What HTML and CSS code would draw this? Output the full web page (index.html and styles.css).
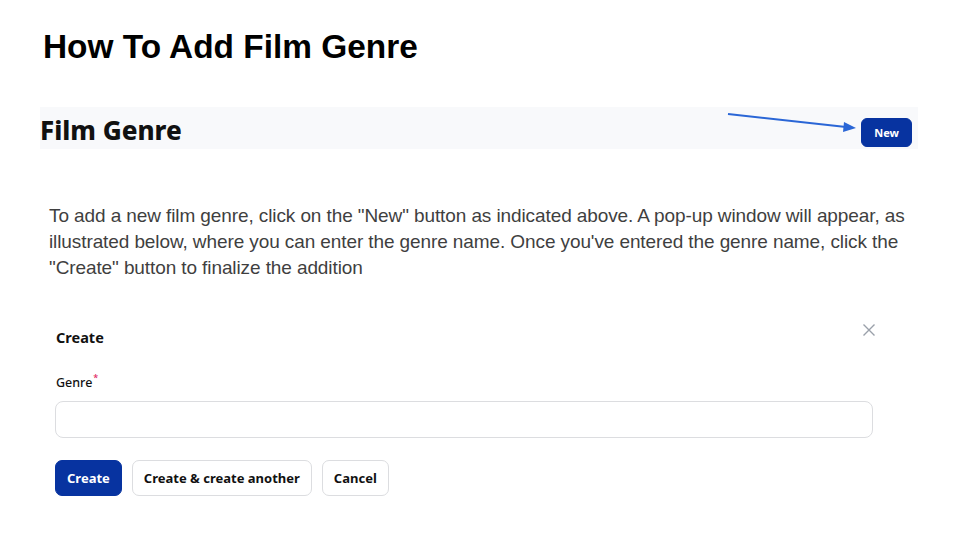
FILE: index.html
```html
<!DOCTYPE html>
<html>
<head>
<meta charset="utf-8">
<link rel="stylesheet" href="styles.css">
</head>
<body>
<div class="slide">
  <h1 class="title">How To Add Film Genre</h1>
  <div class="header-bar">
    <h2 class="page-title">Film Genre</h2>
    <div class="new-wrap">
      <svg class="arrow" width="134" height="22" viewBox="0 0 134 22">
        <line x1="2" y1="3" x2="120" y2="16" stroke="#2a66d6" stroke-width="2"/>
        <polygon points="130,17 118,11 117,21" fill="#2a66d6"/>
      </svg>
      <button class="btn btn-primary btn-new">New</button>
    </div>
  </div>
  <p class="desc">To add a new film genre, click on the "New" button as indicated above. A pop-up window will appear, as<br>illustrated below, where you can enter the genre name. Once you've entered the genre name, click the<br>"Create" button to finalize the addition</p>
  <div class="modal">
    <div class="modal-head">
      <h3 class="modal-title">Create</h3>
      <svg class="close" width="14" height="14" viewBox="0 0 14 14">
        <path d="M1.5 1.5 L12.5 12.5 M12.5 1.5 L1.5 12.5" stroke="#9aa0aa" stroke-width="1.4" fill="none"/>
      </svg>
    </div>
    <label class="label">Genre<sup class="req">*</sup></label>
    <div class="input"></div>
    <div class="actions">
      <button class="btn btn-primary">Create</button>
      <button class="btn btn-outline">Create &amp; create another</button>
      <button class="btn btn-outline">Cancel</button>
    </div>
  </div>
</div>
</body>
</html>
```

FILE: styles.css
```css
* { box-sizing: border-box; }
html, body { margin: 0; padding: 0; background: #fff; }
.slide {
  width: 960px;
  height: 540px;
  position: relative;
  overflow: hidden;
  padding: 27px 42px 0 40px;
}
.title {
  margin: 0 0 0 3px;
  font-family: "Liberation Sans", Arial, sans-serif;
  font-weight: bold;
  font-size: 33.4px;
  line-height: 40px;
  color: #000;
}
.header-bar {
  margin-top: 40px;
  height: 42px;
  background: #f8f9fb;
  display: flex;
  align-items: center;
  justify-content: space-between;
  padding: 0 6px 0 0;
}
.page-title {
  margin: 4px 0 0 0;
  font-family: "Noto Sans", sans-serif;
  font-weight: 800;
  font-size: 26px;
  color: #111;
}
.new-wrap {
  display: flex;
  align-items: center;
  position: relative;
  margin-top: 8px;
}
.arrow {
  position: absolute;
  right: 52px;
  top: -7px;
}
.btn {
  font-family: "Noto Sans", sans-serif;
  font-weight: 700;
  font-size: 13px;
  border-radius: 7px;
  height: 36px;
  padding: 0 11px;
  cursor: pointer;
}
.btn-primary {
  background: #0733a0;
  color: #fff;
  border: 1px solid #0733a0;
}
.btn-outline {
  background: #fff;
  color: #111;
  border: 1px solid #dcdde0;
}
.btn-new {
  height: 29px;
  font-size: 11px;
  padding: 0 12px;
  border-radius: 6px;
}
.desc {
  margin: 54px 0 0 9px;
  font-family: "Liberation Sans", Arial, sans-serif;
  font-size: 19px;
  line-height: 26px;
  color: #3f3f3f;
  white-space: nowrap;
  letter-spacing: -0.1px;
}
.modal {
  margin: 40px 0 0 15px;
  width: 818px;
}
.modal-head {
  display: flex;
  justify-content: space-between;
  align-items: flex-start;
}
.modal-title {
  margin: 6px 0 0 1px;
  font-family: "Noto Sans", sans-serif;
  font-weight: 700;
  font-size: 14.5px;
  color: #111;
}
.close { margin: 2px -3px 0 0; }
.label {
  display: block;
  margin: 24px 0 0 1px;
  font-family: "Noto Sans", sans-serif;
  font-weight: 500;
  font-size: 12.5px;
  color: #111;
}
.req { color: #e0245e; font-size: 9px; vertical-align: 6px; margin-left: 1px; }
.input {
  margin-top: 10px;
  height: 37px;
  border: 1px solid #dcdde0;
  border-radius: 8px;
}
.actions {
  display: flex;
  gap: 10px;
  margin-top: 22px;
}
```
